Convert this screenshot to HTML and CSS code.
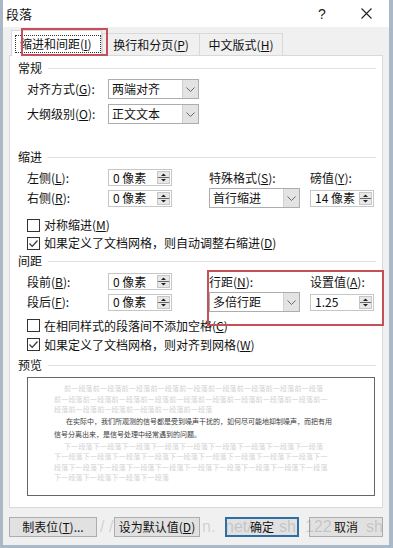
FILE: index.html
```html
<!DOCTYPE html>
<html lang="zh-CN">
<head>
<meta charset="utf-8">
<title>段落</title>
<link rel="stylesheet" href="styles.css">
</head>
<body>
<div class="window">
  <div class="titlebar">
    <span class="title">段落</span>
    <span class="help">?</span>
    <span class="close"><svg width="11" height="11" viewBox="0 0 11 11"><path d="M0.5 0.5L10.5 10.5M10.5 0.5L0.5 10.5" stroke="#222" stroke-width="1.1" fill="none"/></svg></span>
  </div>

  <div class="tabs">
    <div class="tab active"><span class="focus">缩进和间距(<u>I</u>)</span></div>
    <div class="tab t2">换行和分页(<u>P</u>)</div>
    <div class="tab t3">中文版式(<u>H</u>)</div>
  </div>

  <div class="panel">
    <div class="group">常规</div>
    <div class="frow r1">
      <span class="lbl">对齐方式(<u>G</u>):</span>
      <div class="select w91"><span class="val">两端对齐</span><span class="dd"><svg width="9" height="5" viewBox="0 0 9 5"><path d="M0.5 0.5L4.5 4.5L8.5 0.5" stroke="#666" fill="none"/></svg></span></div>
    </div>
    <div class="frow r2">
      <span class="lbl">大纲级别(<u>O</u>):</span>
      <div class="select w91"><span class="val">正文文本</span><span class="dd"><svg width="9" height="5" viewBox="0 0 9 5"><path d="M0.5 0.5L4.5 4.5L8.5 0.5" stroke="#666" fill="none"/></svg></span></div>
    </div>

    <div class="group g2">缩进</div>
    <div class="grid gr1">
      <span class="lbl">左侧(<u>L</u>):</span>
      <div class="spin"><span class="val">0 像素</span><svg class="sb" width="13" height="13" viewBox="0 0 13 13"><rect x="0.5" y="0.5" width="12" height="12" fill="#e8e8e8" stroke="#c6c6c6"/><path d="M1 6.5H12" stroke="#666"/><path d="M4 5H9L6.5 2.5Z" fill="#222"/><path d="M4 8H9L6.5 10.5Z" fill="#222"/></svg></div>
      <span class="lbl">特殊格式(<u>S</u>):</span>
      <span class="lbl">磅值(<u>Y</u>):</span>
      <span class="lbl">右侧(<u>R</u>):</span>
      <div class="spin"><span class="val">0 像素</span><svg class="sb" width="13" height="13" viewBox="0 0 13 13"><rect x="0.5" y="0.5" width="12" height="12" fill="#e8e8e8" stroke="#c6c6c6"/><path d="M1 6.5H12" stroke="#666"/><path d="M4 5H9L6.5 2.5Z" fill="#222"/><path d="M4 8H9L6.5 10.5Z" fill="#222"/></svg></div>
      <div class="select w91"><span class="val">首行缩进</span><span class="dd"><svg width="9" height="5" viewBox="0 0 9 5"><path d="M0.5 0.5L4.5 4.5L8.5 0.5" stroke="#666" fill="none"/></svg></span></div>
      <div class="spin"><span class="val">14 像素</span><svg class="sb" width="13" height="13" viewBox="0 0 13 13"><rect x="0.5" y="0.5" width="12" height="12" fill="#e8e8e8" stroke="#c6c6c6"/><path d="M1 6.5H12" stroke="#666"/><path d="M4 5H9L6.5 2.5Z" fill="#222"/><path d="M4 8H9L6.5 10.5Z" fill="#222"/></svg></div>
    </div>
    <div class="checks c1">
      <div class="chk"><span class="box"></span>对称缩进(<u>M</u>)</div>
      <div class="chk"><span class="box"><svg width="11" height="11" viewBox="0 0 11 11"><path d="M1.5 5.5L4.2 8.3L9.5 2.5" stroke="#333" stroke-width="1.2" fill="none"/></svg></span>如果定义了文档网格，则自动调整右缩进(<u>D</u>)</div>
    </div>

    <div class="group g3">间距</div>
    <div class="grid gr2">
      <span class="lbl">段前(<u>B</u>):</span>
      <div class="spin"><span class="val">0 像素</span><svg class="sb" width="13" height="13" viewBox="0 0 13 13"><rect x="0.5" y="0.5" width="12" height="12" fill="#e8e8e8" stroke="#c6c6c6"/><path d="M1 6.5H12" stroke="#666"/><path d="M4 5H9L6.5 2.5Z" fill="#222"/><path d="M4 8H9L6.5 10.5Z" fill="#222"/></svg></div>
      <span class="lbl">行距(<u>N</u>):</span>
      <span class="lbl">设置值(<u>A</u>):</span>
      <span class="lbl">段后(<u>F</u>):</span>
      <div class="spin"><span class="val">0 像素</span><svg class="sb" width="13" height="13" viewBox="0 0 13 13"><rect x="0.5" y="0.5" width="12" height="12" fill="#e8e8e8" stroke="#c6c6c6"/><path d="M1 6.5H12" stroke="#666"/><path d="M4 5H9L6.5 2.5Z" fill="#222"/><path d="M4 8H9L6.5 10.5Z" fill="#222"/></svg></div>
      <div class="select w91"><span class="val">多倍行距</span><span class="dd"><svg width="9" height="5" viewBox="0 0 9 5"><path d="M0.5 0.5L4.5 4.5L8.5 0.5" stroke="#666" fill="none"/></svg></span></div>
      <div class="spin"><span class="val">1.25</span><svg class="sb" width="13" height="13" viewBox="0 0 13 13"><rect x="0.5" y="0.5" width="12" height="12" fill="#e8e8e8" stroke="#c6c6c6"/><path d="M1 6.5H12" stroke="#666"/><path d="M4 5H9L6.5 2.5Z" fill="#222"/><path d="M4 8H9L6.5 10.5Z" fill="#222"/></svg></div>
    </div>
    <div class="checks c2">
      <div class="chk"><span class="box"></span>在相同样式的段落间不添加空格(<u>C</u>)</div>
      <div class="chk"><span class="box"><svg width="11" height="11" viewBox="0 0 11 11"><path d="M1.5 5.5L4.2 8.3L9.5 2.5" stroke="#333" stroke-width="1.2" fill="none"/></svg></span>如果定义了文档网格，则对齐到网格(<u>W</u>)</div>
    </div>

    <div class="group g4">预览</div>
    <div class="preview">
      <div class="pl first">前一段落前一段落前一段落前一段落前一段落前一段落前一段落前一段落前一段落</div>
      <div class="pl">前一段落前一段落前一段落前一段落前一段落前一段落前一段落前一段落前一段落前一</div>
      <div class="pl">段落前一段落前一段落前一段落前一段落前一段落</div>
      <div class="pd first">在实际中，我们所观测的信号都是受到噪声干扰的，如何尽可能地抑制噪声，而把有用</div>
      <div class="pd">信号分离出来，是信号处理中经常遇到的问题。</div>
      <div class="pl first">下一段落下一段落下一段落下一段落下一段落下一段落下一段落下一段落下一段落</div>
      <div class="pl">下一段落下一段落下一段落下一段落下一段落下一段落下一段落下一段落下一段落下一</div>
      <div class="pl">段落下一段落下一段落下一段落下一段落下一段落下一段落下一段落下一段落下一段落</div>
      <div class="pl">下一段落下一段落下一段落下一段落</div>
    </div>
  </div>

  <div class="footer">
    <div class="btn b1">制表位(<u>T</u>)...</div>
    <div class="btn b2">设为默认值(<u>D</u>)</div>
    <div class="btn b3 default">确定</div>
    <div class="btn b4">取消</div>
  </div>

  <span class="mark m1">/ /</span>
  <span class="mark m2">n.</span>
  <span class="mark m3">net/</span>
  <span class="mark m4">sh</span>
  <span class="mark m5">122</span>
  <span class="mark m6">sh</span>
  <div class="hl hl1"></div>
  <div class="hl hl2"></div>
</div>
</body>
</html>
```
FILE: styles.css
```css
* { box-sizing: border-box; }
html, body { margin: 0; padding: 0; }
body {
  width: 393px;
  height: 548px;
  overflow: hidden;
  background: #a6b8c9;
  font-family: "Noto Sans CJK SC", "Noto Sans", "DejaVu Sans", sans-serif;
  font-size: 12px;
  color: #111;
}
u { text-underline-offset: 1px; text-decoration-thickness: 1px; }

.window {
  position: relative;
  width: 393px;
  height: 548px;
  background: #f0f0f0;
  border-style: solid;
  border-color: #a9b9c8;
  border-width: 0 4px 3px 3px;
  display: flex;
  flex-direction: column;
}

/* title bar */
.titlebar {
  height: 27px;
  background: #fff;
  display: flex;
  align-items: center;
  padding: 0 13px 0 3px;
}
.title { font-size: 13px; line-height: 16px; }
.help {
  margin-left: auto;
  width: 20px;
  text-align: center;
  font-family: "Liberation Sans", sans-serif;
  font-size: 14px;
  line-height: 16px;
  color: #222;
}
.close {
  width: 20px;
  margin-left: 24px;
  display: flex;
  justify-content: center;
}

/* tabs */
.tabs {
  height: 28px;
  display: flex;
  align-items: flex-end;
  padding-left: 8px;
  position: relative;
  z-index: 1;
}
.tab {
  height: 22px;
  border: 1px solid #d9d9d9;
  border-bottom: none;
  background: #f0f0f0;
  display: flex;
  align-items: center;
  justify-content: center;
  line-height: 14px;
}
.tab.active {
  width: 91px;
  height: 26px;
  margin-bottom: -1px;
  background: #fff;
  justify-content: flex-start;
  padding-left: 3px;
}
.focus {
  width: 86px;
  height: 18px;
  border: 1px dotted #333;
  padding-left: 4px;
  display: flex;
  align-items: center;
}
.t2 { width: 98px; }
.t3 { width: 84px; margin-left: -1px; }

/* panel */
.panel {
  margin: 0 6px;
  height: 453px;
  background: #fff;
  border: 1px solid #d9d9d9;
  padding: 5px 6px 0 8px;
}
.group {
  display: flex;
  align-items: center;
  height: 14px;
  line-height: 14px;
}
.group::after {
  content: "";
  flex: 1;
  height: 1px;
  background: #e2e2e2;
  margin-left: 6px;
}
.g2 { margin-top: 26px; }
.g3 { margin-top: 2px; }
.g4 { margin-top: 4px; }

.frow {
  display: flex;
  align-items: center;
  height: 20px;
  margin-left: 9px;
}
.r1 { margin-top: 4px; }
.r2 { margin-top: 5px; }
.lbl { line-height: 14px; white-space: nowrap; }
.frow .lbl { width: 81px; }

.grid {
  display: grid;
  grid-template-columns: 81px 101px 101px 64px;
  grid-template-rows: 19px 22px;
  align-items: center;
  margin: 4px 0 0 9px;
}

.select {
  height: 20px;
  border: 1px solid #adadad;
  background: #fff;
  display: flex;
  align-items: stretch;
}
.w91 { width: 91px; }
.select .val { flex: 1; padding-left: 3px; line-height: 18px; }
.dd {
  width: 16px;
  background: #e3e3e3;
  border-left: 1px solid #d0d0d0;
  display: flex;
  align-items: center;
  justify-content: center;
}

.spin {
  width: 64px;
  height: 17px;
  border: 1px solid #c6c6c6;
  background: #fff;
  display: flex;
  align-items: center;
  padding: 0 1px 0 4px;
}
.spin .val { flex: 1; line-height: 14px; white-space: nowrap; }
.sb { display: block; }

.checks { margin-left: 9px; }
.c1 { margin-top: 7px; }
.c1 .chk { height: 18px; }
.c2 { margin-top: 3px; }
.c2 .chk { height: 19px; }
.chk {
  display: flex;
  align-items: center;
  line-height: 14px;
  white-space: nowrap;
}
.box {
  width: 13px;
  height: 13px;
  border: 1px solid #333;
  background: #fff;
  margin-right: 4px;
  display: flex;
  align-items: center;
  justify-content: center;
}

/* preview */
.preview {
  margin: 5px 0 0 9px;
  width: 348px;
  height: 119px;
  border: 1px solid #666;
  background: #fff;
  padding: 5px 0 0 26px;
  overflow: hidden;
}
.pl, .pd {
  font-size: 7px;
  white-space: nowrap;
}
.pl { line-height: 10.5px; color: #d2d2d2; letter-spacing: 0.2px; }
.pd { line-height: 13px; color: #3a3a3a; letter-spacing: 0; }
.pl.first { padding-left: 10px; }
.pd.first { padding-left: 12px; }

/* footer */
.footer {
  height: 37px;
  display: flex;
  align-items: flex-start;
  padding: 9px 0 0 6px;
}
.btn {
  height: 20px;
  border: 1px solid #adadad;
  background: #e1e1e1;
  display: flex;
  align-items: center;
  justify-content: center;
  line-height: 14px;
  white-space: nowrap;
}
.b1 { width: 88px; }
.b2 { width: 86px; margin-left: 17px; }
.b3 { width: 74px; margin-left: 25px; }
.b4 { width: 74px; margin-left: 10px; }
.default { border: 2px solid #2f6ea5; }

/* overlays: faint watermark pieces and red highlight frames */
.mark {
  position: absolute;
  top: 517px;
  font-family: "Liberation Sans", sans-serif;
  font-size: 16px;
  line-height: 19px;
  color: rgba(120, 120, 120, 0.28);
  white-space: nowrap;
  z-index: 4;
}
.m1 { left: 97px; }
.m2 { left: 199px; }
.m3 { left: 222px; }
.m4 { left: 276px; }
.m5 { left: 302px; }
.m6 { left: 363px; }

.hl {
  position: absolute;
  border: 2px solid #c4505a;
  z-index: 5;
}
.hl1 { left: 18px; top: 28px; width: 87px; height: 28px; }
.hl2 { left: 204px; top: 270px; width: 177px; height: 56px; }
```
